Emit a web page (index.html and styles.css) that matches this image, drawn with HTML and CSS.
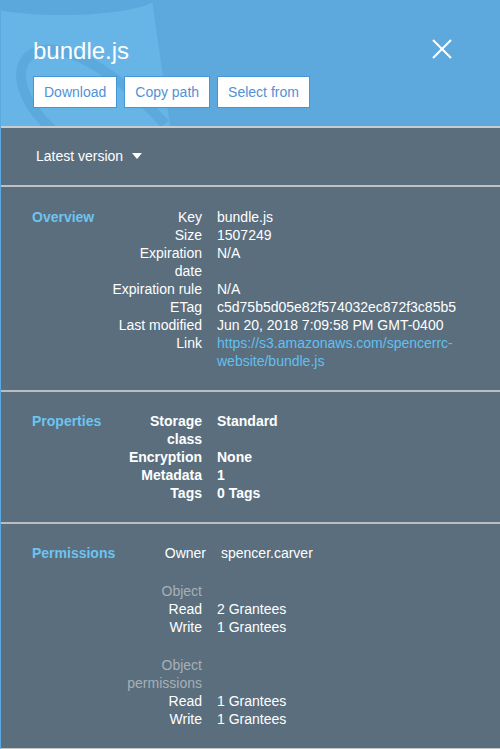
FILE: index.html
```html
<!DOCTYPE html>
<html lang="en">
<head>
<meta charset="utf-8">
<title>bundle.js</title>
<link rel="stylesheet" href="styles.css">
</head>
<body>
<div class="panel">
  <header class="header">
    <svg class="bucket" width="500" height="126" viewBox="0 0 500 126" aria-hidden="true">
      <polygon points="-10,0 152,0 170,126 -10,126" fill="#66b5e6"/>
      <ellipse cx="62" cy="-4" rx="96" ry="19" fill="#5ba8dc"/>
      <path d="M165 124 C 120 75, 60 35, 30 55 C 14 68, 18 100, 55 132" fill="none" stroke="#5caadd" stroke-width="10"/>
    </svg>
    <h1 class="title">bundle.js</h1>
    <div class="actions">
      <button class="btn">Download</button>
      <button class="btn">Copy path</button>
      <button class="btn">Select from</button>
    </div>
    <button class="close" aria-label="Close">
      <svg width="20" height="20" viewBox="0 0 20 20"><path d="M1 1 L19 19 M19 1 L1 19" stroke="#fff" stroke-width="2" fill="none"/></svg>
    </button>
  </header>

  <div class="version">
    <span>Latest version</span><span class="caret"></span>
  </div>

  <section class="section">
    <h2 class="section-title">Overview</h2>
    <div class="grid">
      <div class="label">Key</div><div class="value">bundle.js</div>
      <div class="label">Size</div><div class="value">1507249</div>
      <div class="label">Expiration date</div><div class="value">N/A</div>
      <div class="label">Expiration rule</div><div class="value">N/A</div>
      <div class="label">ETag</div><div class="value">c5d75b5d05e82f574032ec872f3c85b5</div>
      <div class="label">Last modified</div><div class="value">Jun 20, 2018 7:09:58 PM GMT-0400</div>
      <div class="label">Link</div><div class="value"><a class="link" href="#">https://s3.amazonaws.com/spencerrc-website/bundle.js</a></div>
    </div>
  </section>

  <section class="section">
    <h2 class="section-title">Properties</h2>
    <div class="grid bold">
      <div class="label">Storage class</div><div class="value">Standard</div>
      <div class="label">Encryption</div><div class="value">None</div>
      <div class="label">Metadata</div><div class="value">1</div>
      <div class="label">Tags</div><div class="value">0 Tags</div>
    </div>
  </section>

  <section class="section last">
    <h2 class="section-title">Permissions</h2>
    <div class="groups">
      <div class="grid owner">
        <div class="label">Owner</div><div class="value">spencer.carver</div>
      </div>
      <div class="grid">
        <div class="label muted">Object</div><div class="value"></div>
        <div class="label">Read</div><div class="value">2 Grantees</div>
        <div class="label">Write</div><div class="value">1 Grantees</div>
      </div>
      <div class="grid">
        <div class="label muted">Object permissions</div><div class="value"></div>
        <div class="label">Read</div><div class="value">1 Grantees</div>
        <div class="label">Write</div><div class="value">1 Grantees</div>
      </div>
    </div>
  </section>
</div>
</body>
</html>
```

FILE: styles.css
```css
* { box-sizing: border-box; }

html, body {
  margin: 0;
  padding: 0;
}

body {
  width: 500px;
  height: 749px;
  overflow: hidden;
  background: #5a6e7e;
  font-family: "Liberation Sans", Arial, sans-serif;
  font-size: 14px;
  line-height: 18px;
  color: #ffffff;
}

.panel {
  min-height: 749px;
  border-left: 1px solid #5ca9dd;
  border-bottom: 2px solid #c3c7ca;
  background: #5a6e7e;
}

.header {
  position: relative;
  height: 128px;
  padding: 37px 0 0 32px;
  background: #5da9dd;
  border-bottom: 2px solid #c9ccce;
  overflow: hidden;
}

.bucket {
  position: absolute;
  left: -1px;
  top: 0;
  z-index: 0;
}

.title {
  position: relative;
  z-index: 1;
  margin: 0;
  font-size: 24px;
  line-height: 28px;
  font-weight: normal;
  color: #ffffff;
}

.actions {
  position: relative;
  z-index: 1;
  display: flex;
  gap: 7px;
  margin-top: 11px;
}

.btn {
  height: 32px;
  padding: 0 10px;
  border: 1px solid #4496da;
  background: #ffffff;
  color: #4f92d6;
  font-family: "Liberation Sans", Arial, sans-serif;
  font-size: 14px;
  line-height: 30px;
  cursor: pointer;
}

.close {
  position: absolute;
  z-index: 1;
  top: 39px;
  right: 48px;
  width: 20px;
  height: 20px;
  padding: 0;
  border: 0;
  background: none;
  display: block;
}

.close svg { display: block; }

.version {
  display: flex;
  align-items: center;
  padding: 19px 35px 20px;
  border-bottom: 2px solid #bcc1c5;
}

.caret {
  width: 0;
  height: 0;
  margin-left: 9px;
  border-left: 5px solid transparent;
  border-right: 5px solid transparent;
  border-top: 6px solid #ffffff;
}

.section {
  display: flex;
  padding: 21px 20px 20px 31px;
  border-bottom: 2px solid #b9bec2;
}

.section + .section {
  padding-top: 20px;
}

.section.last {
  border-bottom: 0;
}

.section-title {
  flex: 0 0 80px;
  min-width: 0;
  white-space: nowrap;
  margin: 0;
  font-size: 14px;
  line-height: 18px;
  font-weight: bold;
  color: #6dc4f0;
}

.grid {
  display: grid;
  grid-template-columns: 90px 1fr;
  column-gap: 15px;
  flex: 1;
}

.grid.owner {
  grid-template-columns: 94px 1fr;
}

.grid.bold {
  font-weight: bold;
}

.groups {
  flex: 1;
  display: flex;
  flex-direction: column;
  gap: 20px;
}

.label {
  text-align: right;
}

.label.muted {
  color: #a8b0b6;
}

.link {
  color: #62c0f0;
  text-decoration: none;
}
```
